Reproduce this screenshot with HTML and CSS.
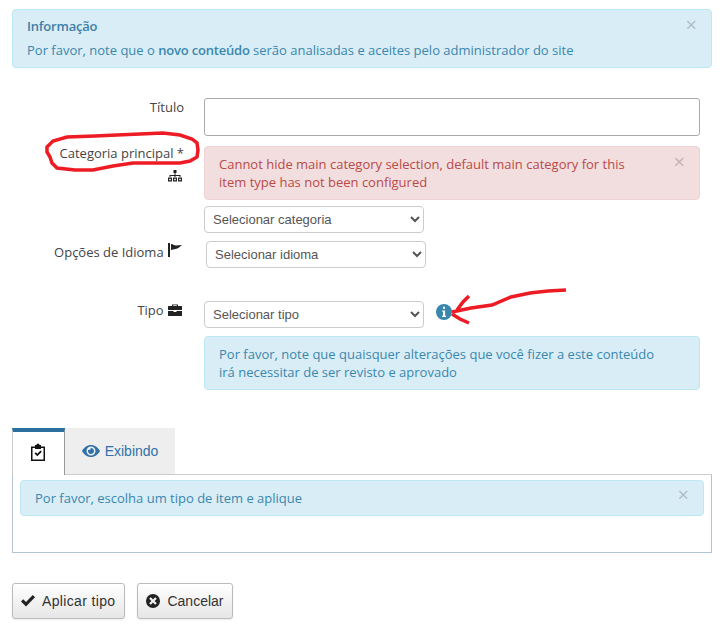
FILE: index.html
```html
<!DOCTYPE html>
<html lang="pt">
<head>
<meta charset="utf-8">
<title>Formulário</title>
<link rel="stylesheet" href="styles.css">
</head>
<body>
<div class="page">
  <div class="alert info top">
    <span class="close top-close">×</span>
    <div class="alert-title">Informação</div>
    <div>Por favor, note que o <strong>novo conteúdo</strong> serão analisadas e aceites pelo administrador do site</div>
  </div>

  <div class="row row-title">
    <label class="lbl">Título</label>
    <div class="field"><input class="text" type="text"></div>
  </div>

  <div class="row row-cat">
    <div class="lbl lbl-cat">
      <div>Categoria principal *</div>
      <svg class="ic ic-tree" viewBox="0 0 14 12"><path d="M5.500 0h3v3h-3zM6.500 3h1v2h5v2h-1V6H7.500v1h-1V6H2.500v1h-1V5h5z"/><path d="M0 7.500h4v4H0zM1.200 8.700v1.600h1.600V8.700zM5 7.500h4v4H5zM6.200 8.700v1.600h1.600V8.700zM10 7.500h4v4h-4zM11.200 8.700v1.600h1.600V8.700z" fill-rule="evenodd"/></svg>
    </div>
    <div class="field">
      <div class="alert danger">
        <span class="close">×</span>
        Cannot hide main category selection, default main category for this item type has not been configured
      </div>
      <select class="sel sel-cat"><option>Selecionar categoria</option></select>
    </div>
  </div>

  <div class="row row-lang">
    <div class="lbl lbl-ic">Opções de Idioma
      <svg class="ic ic-flag" viewBox="0 0 14 14"><path d="M0 0h2v14H0zM3 1c2 0 3 1.500 5 1.500l6-.5-3 2.500c-2 1.500-5 1.500-8 2.500z"/></svg>
    </div>
    <select class="sel sel-lang"><option>Selecionar idioma</option></select>
  </div>

  <div class="row row-type">
    <div class="lbl lbl-ic">Tipo
      <svg class="ic ic-case" viewBox="0 0 14 12"><path fill-rule="evenodd" d="M4 2V.5h6V2h3.500c.3 0 .5.200.5.500V6H0V2.500c0-.3.200-.5.500-.5zm1.200 0h3.600V1.300H5.200zM0 7h5.500v1h3V7H14v4.500c0 .3-.2.500-.5.500H.5c-.3 0-.5-.2-.5-.5z"/></svg>
    </div>
    <div class="field">
      <div class="sel-line">
        <select class="sel"><option>Selecionar tipo</option></select>
        <svg class="ic-info" viewBox="0 0 16 16"><circle cx="8" cy="8" r="8" fill="#3a87ad"/><path fill="#fff" d="M7 2.800h2v2H7zM6.200 6.500h2.900v5.200h1v1.200H6v-1.200h1V7.700h-.8z"/></svg>
      </div>
      <div class="alert info note">Por favor, note que quaisquer alterações que você fizer a este conteúdo irá necessitar de ser revisto e aprovado</div>
    </div>
  </div>

  <div class="tabs">
    <div class="tab tab-active">
      <svg class="ic-clip" viewBox="0 0 16 18"><path fill="#111" fill-rule="evenodd" d="M5 2h1.500a1.500 1.500 0 0 1 3 0H11v1.500h4V18H1V3.500h4zM2.500 5v11.500h11V5H11v1H5V5z"/><path fill="#111" d="M4.500 10.500l1.300-1.300 1.500 1.500 3.200-3.200 1.300 1.300-4.500 4.500z"/></svg>
    </div>
    <div class="tab tab-other">
      <svg class="ic-eye" viewBox="0 0 18 12"><path fill="#3071a9" fill-rule="evenodd" d="M9 0c4 0 7.300 2.700 9 6-1.700 3.300-5 6-9 6s-7.300-2.700-9-6c1.700-3.300 5-6 9-6zm0 1.500A4.500 4.500 0 1 0 9 10.500 4.500 4.500 0 0 0 9 1.500zM9 3a3 3 0 1 1-2.800 1.800 2 2 0 0 0 2.600-1.800z"/></svg>
      Exibindo
    </div>
  </div>
  <div class="tab-body">
    <div class="alert info inner"><span class="close inner-close">×</span>Por favor, escolha um tipo de item e aplique</div>
  </div>

  <div class="actions">
    <button class="btn btn-apply" type="button">
      <svg class="ic-btn" viewBox="0 0 14 12"><path d="M0 6.500l2.200-2.200 2.800 2.800L11.800 0 14 2.200 5 11.500z"/></svg>
      Aplicar tipo
    </button>
    <button class="btn" type="button">
      <svg class="ic-btn" viewBox="0 0 14 14"><path fill-rule="evenodd" d="M7 0a7 7 0 1 1 0 14A7 7 0 0 1 7 0zM4.800 3.200L3.200 4.800 5.400 7 3.200 9.200l1.600 1.600L7 8.600l2.200 2.200 1.600-1.600L8.600 7l2.200-2.200-1.600-1.600L7 5.400z"/></svg>
      Cancelar
    </button>
  </div>

  <svg class="marks" viewBox="0 0 727 632">
    <path d="M47 147L53 141L67 137L95 136L117 135L140 134L163 133L180 135L192 139L197 143L198 150L197 157L190 161L180 163L155 163L133 163L113 166L93 170L75 170L57 168L52 163L50 157L47 152Z"/>
    <path d="M566 290L548 291L530 293L511 297L492 305L471 308L452 312M469 296L463 302L457 310M452 314L460 319L469 323"/>
  </svg>
</div>
</body>
</html>
```

FILE: styles.css
```css
* { box-sizing: border-box; }
html, body { margin: 0; padding: 0; background: #fff; }
body {
  font-family: "Open Sans", sans-serif;
  font-size: 13px;
  line-height: 18px;
  color: #444;
}
.page {
  position: relative;
  width: 727px;
  height: 632px;
  padding: 9px 15px 0 12px;
  overflow: hidden;
}
.alert {
  position: relative;
  border: 1px solid;
  border-radius: 4px;
  padding: 7px 14px;
}
.info { background: #d9edf7; border-color: #bce8f1; color: #3a87ad; }
.danger { background: #f2dede; border-color: #eed3d7; color: #b94a48; }
.top { height: 59px; }
.alert-title { font-weight: 600; margin-bottom: 6px; color: #3f7fa5; letter-spacing: -.2px; }
.alert strong { font-weight: 600; letter-spacing: -.2px; }
.close {
  position: absolute;
  right: 14px;
  top: 5px;
  font-size: 20px;
  line-height: 20px;
  color: #000;
  opacity: .2;
}
.row { display: flex; }
.lbl {
  width: 172px;
  flex: none;
  margin-right: 20px;
  text-align: right;
}
.lbl-ic { padding-right: 2px; }
.field { flex: none; width: 496px; }
.row-title { margin-top: 30px; }
.text {
  display: block;
  width: 100%;
  height: 38px;
  border: 1px solid #aaa;
  border-radius: 3px;
  background: #fff;
}
.row-cat { margin-top: 10px; }
.lbl-cat { margin-top: -2px; }
.row-cat .alert { height: 54px; padding: 8px 60px 8px 14px; }
.row-cat .close { top: 5px; right: 14px; }
.sel {
  display: block;
  width: 220px;
  height: 27px;
  padding: 0 4px;
  border: 1px solid #ccc;
  border-radius: 4px;
  background: #fff;
  font-family: "Liberation Sans", Arial, sans-serif;
  font-size: 13px;
  color: #555;
}
.sel-cat { margin-top: 6px; }
.row-lang { margin-top: 8px; }
.row-lang .lbl { margin-right: 22px; padding-top: 2px; }
.row-type { margin-top: 33px; }
.sel-line { display: flex; align-items: center; gap: 12px; }
.ic-info { width: 16px; height: 16px; margin-top: -6px; }
.note { margin-top: 8px; height: 54px; padding: 8px 30px 8px 14px; }
.ic { fill: #222; display: inline-block; vertical-align: -1px; }
.ic-tree { display: block; width: 14px; height: 12px; margin: 8px 2px 0 auto; }
.ic-flag { width: 14px; height: 14px; margin-left: 1px; vertical-align: 0; }
.ic-case { width: 14px; height: 12px; margin-left: 1px; }
.tabs { display: flex; margin-top: 38px; height: 47px; position: relative; z-index: 1; }
.tab { display: flex; align-items: center; justify-content: center; }
.tab-active {
  width: 53px;
  height: 47px;
  padding: 0 1px 4px 0;
  background: #fff;
  border-top: 4px solid #2a6f9e;
  border-left: 1px solid #ccc;
  border-right: 1px solid #999;
}
.tab-other {
  width: 110px;
  height: 46px;
  background: #eee;
  color: #3071a9;
  font-family: "Liberation Sans", Arial, sans-serif;
  font-size: 14px;
  gap: 5px;
}
.ic-clip { width: 16px; height: 18px; }
.ic-eye { width: 18px; height: 12px; }
.tab-body {
  height: 79px;
  margin-top: -1px;
  padding: 5px 7px;
  border: 1px solid #b3c4d4;
  border-top-color: #ccc;
}
.inner { height: 36px; padding-top: 8px; }
.inner-close { top: 4px; }
.actions { display: flex; gap: 12px; margin-top: 30px; }
.btn {
  display: flex;
  align-items: center;
  gap: 7px;
  height: 36px;
  padding: 0 8px 0 8px;
  border: 1px solid #bbb;
  border-radius: 3px;
  background: linear-gradient(#fff, #e6e6e6);
  box-shadow: 0 1px 2px rgba(0,0,0,.08);
  font-family: "Liberation Sans", Arial, sans-serif;
  font-size: 14px;
  color: #333;
}
.btn-apply { letter-spacing: .35px; padding-right: 9px; }
.ic-btn { width: 14px; height: 14px; fill: #222; }
.marks {
  position: absolute;
  left: 0;
  top: 0;
  width: 727px;
  height: 632px;
  fill: none;
  stroke: #ed1c24;
  stroke-width: 3.5;
  pointer-events: none;
}
```
